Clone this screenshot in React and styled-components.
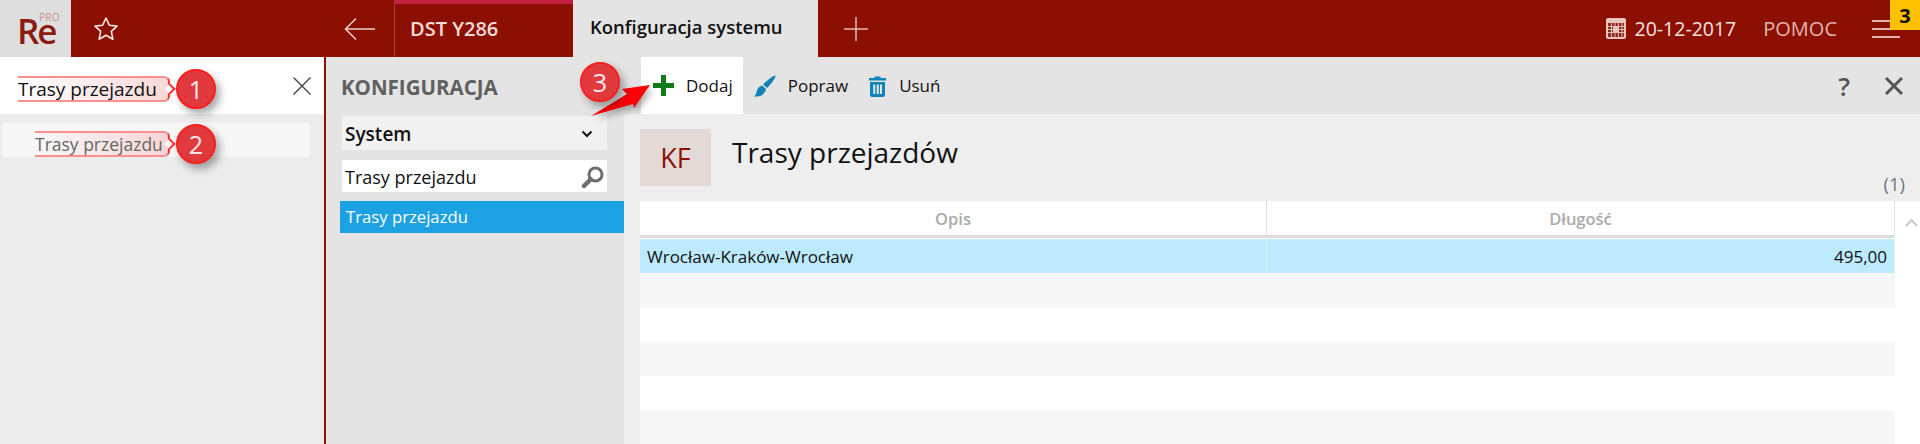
import styled, { createGlobalStyle } from "styled-components";

const GlobalStyle = createGlobalStyle`
  html, body {
    margin: 0;
    padding: 0;
    background: #fff;
  }
  body {
    font-family: "Open Sans", "Noto Sans", sans-serif;
    overflow: hidden;
  }
`;

const RED = "#8b1002";

const Rows = [0, 1, 2, 3, 4];

const App = () => {
  return (
    <Page>
      <GlobalStyle />
      <TopBar>
        <Logo>
          <LogoText>Re</LogoText>
          <LogoPro>PRO</LogoPro>
        </Logo>
        <StarButton>
          <svg width="26" height="26" viewBox="0 0 26 26" fill="none" stroke="#f6e7e4" strokeWidth="1.6" strokeLinejoin="round">
            <path d="M13 2l3.3 7.2 7.7.9-5.7 5.3 1.6 7.8L13 19.3l-6.9 3.9 1.6-7.8L2 10.1l7.7-.9z" />
          </svg>
        </StarButton>
        <BackButton>
          <svg width="31" height="24" viewBox="0 0 31 24" fill="none" stroke="#eccfca" strokeWidth="1.5">
            <path d="M31 12H1.5M12 1.5L1.5 12 12 22.5" />
          </svg>
        </BackButton>
        <Tab>DST Y286</Tab>
        <ActiveTab>Konfiguracja systemu</ActiveTab>
        <AddTab>
          <svg width="24" height="24" viewBox="0 0 24 24" stroke="#e2b9b3" strokeWidth="1.5">
            <path d="M12 0v24M0 12h24" />
          </svg>
        </AddTab>
        <RightGroup>
          <svg width="20" height="21" viewBox="0 0 20 21">
            <rect width="20" height="21" rx="2" fill="#e9c4bf" />
            <rect x="2" y="5" width="16" height="14" fill="#8b2a20" />
            <path d="M2 8.5h16M2 11.5h16M2 14.5h16M5.5 5v14M9 5v14M12.5 5v14M16 5v14" stroke="#e9c4bf" strokeWidth=".9" />
            <rect x="7" y="8" width="6" height="6" fill="#e9c4bf" />
          </svg>
          <DateText>20-12-2017</DateText>
          <HelpLink>POMOC</HelpLink>
          <Hamburger>
            <span />
            <span />
            <span />
          </Hamburger>
          <Notice>3</Notice>
        </RightGroup>
      </TopBar>

      <Body>
        <Sidebar>
          <SideSearch>
            <Marked $tail={11} $notch="#fff">
              Trasy przejazdu
              <Badge>1</Badge>
            </Marked>
            <ClearIcon width="18" height="18" viewBox="0 0 18 18" stroke="#444" strokeWidth="1.4">
              <path d="M.5.5l17 17M17.5.5l-17 17" />
            </ClearIcon>
          </SideSearch>
          <SideItem>
            <Marked $tail={5} $notch="#f7f7f7">
              Trasy przejazdu
              <Badge>2</Badge>
            </Marked>
          </SideItem>
        </Sidebar>

        <ConfigPanel>
          <ConfigTitle>KONFIGURACJA</ConfigTitle>
          <SelectBox>
            System
            <svg width="12" height="8" viewBox="0 0 12 8" fill="none" stroke="#111" strokeWidth="2">
              <path d="M1.5 1.5L6 6l4.5-4.5" />
            </svg>
          </SelectBox>
          <FilterBox>
            Trasy przejazdu
            <svg width="24" height="24" viewBox="0 0 24 24" fill="none" stroke="#6e6e6e">
              <circle cx="14.5" cy="9.5" r="6.5" strokeWidth="3" />
              <path d="M9.5 14.5L3 21" strokeWidth="4.5" strokeLinecap="round" />
            </svg>
          </FilterBox>
          <ConfigItem>Trasy przejazdu</ConfigItem>
        </ConfigPanel>

        <Main>
          <Toolbar>
            <Pointer width="64" height="36" viewBox="0 0 64 36">
              <polygon points="60,2 32,6 37,11 1,33 43,21 44,25" fill="#fb0007" />
            </Pointer>
            <PointerBadge>3</PointerBadge>
            <ToolButton $active>
              <svg width="21" height="21" viewBox="0 0 21 21">
                <path d="M8 0h5v8h8v5h-8v8H8v-8H0V8h8z" fill="#0f7d1a" />
              </svg>
              Dodaj
            </ToolButton>
            <ToolButton>
              <svg width="22" height="22" viewBox="0 0 22 22">
                <path d="M21.5.5c.5 2-4.5 9-8.5 12.500l-3.800-3.500C12.500 5.500 19.500.5 21.500.5zM8.300 10.500l3.700 3.500c-.5 3-3 6-6 7-2 .6-4.500.6-6 .4 2-1.500 2.300-3.200 2.800-5.400.6-2.800 2.800-5 5.500-5.500z" fill="#0f84b8" />
              </svg>
              Popraw
            </ToolButton>
            <ToolButton>
              <svg width="19" height="22" viewBox="-1 0 19 22">
                <path d="M0 3h5.500V1.500h6V3H17v2.500H0zM1 7h15v13c0 1-.8 2-2 2H3c-1.200 0-2-1-2-2zm3.300 2.500v9.500h2V9.500zm3.500 0v9.500h2V9.500zm3.200 0v9.500h2V9.500z" fill="#0f84b8" fillRule="evenodd" />
              </svg>
              Usuń
            </ToolButton>
            <ToolRight>
              <HelpMark>?</HelpMark>
              <svg width="18" height="18" viewBox="0 0 18 18" stroke="#555" strokeWidth="3">
                <path d="M1 1l16 16M17 1L1 17" />
              </svg>
            </ToolRight>
          </Toolbar>

          <Heading>
            <InitialsBox>KF</InitialsBox>
            <Title>Trasy przejazdów</Title>
            <Count>(1)</Count>
          </Heading>

          <Table>
            <HeadCell>Opis</HeadCell>
            <HeadCell>Długość</HeadCell>
            <ScrollCell>
              <svg width="13" height="9" viewBox="0 0 13 9" fill="none" stroke="#c8c8c8" strokeWidth="2">
                <path d="M1 8l5.5-6L12 8" />
              </svg>
            </ScrollCell>
            <SelectedCell>Wrocław-Kraków-Wrocław</SelectedCell>
            <SelectedCell $right>495,00</SelectedCell>
            <Spacer />
            {Rows.map((row) => (
              <EmptyRow key={row} $odd={row % 2 === 0} />
            ))}
          </Table>
        </Main>
      </Body>
    </Page>
  );
};

const Page = styled.div`
  width: 1920px;
  height: 444px;
  display: flex;
  flex-direction: column;
  overflow: hidden;
`;

const TopBar = styled.header`
  height: 57px;
  flex: none;
  display: flex;
  align-items: stretch;
  background: ${RED};
`;

const Logo = styled.div`
  position: relative;
  width: 71px;
  background: #dedede;
  box-sizing: border-box;
  padding: 21px 0 0 17px;
`;

const LogoText = styled.div`
  font-size: 35px;
  font-weight: 600;
  line-height: 20px;
  letter-spacing: -2px;
  color: #8b1a10;
`;

const LogoPro = styled.span`
  position: absolute;
  left: 39px;
  top: 13px;
  font-size: 10px;
  line-height: 8px;
  letter-spacing: 0.3px;
  color: #c5918b;
`;

const StarButton = styled.div`
  display: flex;
  align-items: center;
  margin: 0 0 0 22px;
`;

const BackButton = styled.div`
  display: flex;
  align-items: center;
  margin-left: 225px;
  width: 50px;
`;

const Tab = styled.div`
  width: 179px;
  box-sizing: border-box;
  border-left: 1px solid #a8443a;
  border-top: 4px solid #c4203f;
  padding: 0 0 4px 15px;
  display: flex;
  align-items: center;
  font-size: 20px;
  font-weight: 600;
  color: #f3dcd8;
`;

const ActiveTab = styled.div`
  width: 245px;
  box-sizing: border-box;
  padding: 0 0 4px 17px;
  display: flex;
  align-items: center;
  background: #e4e4e4;
  font-size: 18.5px;
  font-weight: 600;
  color: #111;
`;

const AddTab = styled.div`
  display: flex;
  align-items: center;
  margin-left: 26px;
`;

const RightGroup = styled.div`
  position: relative;
  margin-left: auto;
  display: flex;
  align-items: center;
  padding-right: 20px;
`;

const DateText = styled.span`
  margin-left: 9px;
  font-size: 19.5px;
  color: #f3e3e0;
`;

const HelpLink = styled.span`
  margin-left: 27px;
  font-size: 20px;
  color: #e0b5af;
`;

const Hamburger = styled.div`
  margin-left: 35px;
  width: 28px;
  display: flex;
  flex-direction: column;
  gap: 6px;

  span {
    display: block;
    height: 2px;
    background: #e0b5af;
  }
`;

const Notice = styled.div`
  position: absolute;
  right: 0;
  top: 0;
  width: 30px;
  height: 30px;
  display: flex;
  align-items: center;
  justify-content: center;
  background: #ffc000;
  color: #111;
  font-size: 20px;
  font-weight: 700;
`;

const Body = styled.div`
  flex: 1;
  display: flex;
  min-height: 0;
`;

const Sidebar = styled.aside`
  width: 326px;
  flex: none;
  box-sizing: border-box;
  background: #ececec;
  border-right: 2px solid ${RED};
`;

const SideSearch = styled.div`
  height: 57px;
  box-sizing: border-box;
  display: flex;
  align-items: center;
  padding: 6px 13px 0 18px;
  background: #fff;
  font-size: 19px;
  color: #111;
`;

const ClearIcon = styled.svg`
  margin: -6px 0 0 auto;
`;

const SideItem = styled.div`
  height: 34px;
  box-sizing: border-box;
  margin: 9px 14px 0 2px;
  padding: 7px 0 0 33px;
  display: flex;
  align-items: center;
  background: #f7f7f7;
  font-size: 17.5px;
  color: #666;
`;

const Marked = styled.span`
  position: relative;
  display: inline-block;
  height: 26px;
  box-sizing: border-box;
  line-height: 22px;
  background: linear-gradient(90deg, rgba(248, 180, 180, 0) 0%, rgba(248, 205, 205, 0.8) 100%);
  border-top: 2px solid #fb8f8f;
  border-bottom: 2px solid #fb8f8f;
  border-right: 2px solid #f33;
  border-radius: 0 6px 6px 0;
  padding-right: ${({ $tail }) => $tail}px;

  &::after {
    content: "";
    position: absolute;
    right: -6px;
    top: 7px;
    width: 6px;
    height: 6px;
    border-top: 2px solid #f33;
    border-right: 2px solid #f33;
    background: ${({ $notch }) => $notch};
    transform: rotate(45deg);
  }
`;

const Badge = styled.span`
  position: absolute;
  left: calc(100% + 8px);
  top: -9px;
  z-index: 1;
  width: 40px;
  height: 40px;
  box-sizing: border-box;
  display: flex;
  align-items: center;
  justify-content: center;
  border: 2px solid #fa1f1f;
  border-radius: 50%;
  background: #e13a3e;
  box-shadow: 4px 5px 8px rgba(0, 0, 0, 0.35);
  color: #fbeaea;
  font-size: 25px;
  font-weight: 400;
`;

const ConfigPanel = styled.section`
  width: 298px;
  flex: none;
  box-sizing: border-box;
  padding: 18px 0 0 16px;
  background: #e4e4e4;
`;

const ConfigTitle = styled.div`
  height: 24px;
  line-height: 24px;
  font-size: 20.5px;
  font-weight: 700;
  color: #606060;
  margin-left: -1px;
`;

const SelectBox = styled.div`
  width: 265px;
  height: 34px;
  box-sizing: border-box;
  margin-top: 17px;
  padding: 1px 14px 0 3px;
  display: flex;
  align-items: center;
  justify-content: space-between;
  background: #f1f1f1;
  font-size: 19px;
  font-weight: 600;
  color: #111;
`;

const FilterBox = styled.div`
  width: 265px;
  height: 32px;
  box-sizing: border-box;
  margin-top: 10px;
  padding: 1px 2px 0 3px;
  display: flex;
  align-items: center;
  justify-content: space-between;
  background: #fff;
  font-size: 18px;
  color: #111;
`;

const ConfigItem = styled.div`
  width: 284px;
  height: 32px;
  box-sizing: border-box;
  margin: 9px 0 0 -2px;
  padding: 0 0 2px 6px;
  display: flex;
  align-items: center;
  background: #1ca1e2;
  font-size: 16.7px;
  color: #fff;
`;

const Main = styled.main`
  flex: 1;
  min-width: 0;
  background: #eee;
`;

const Toolbar = styled.div`
  position: relative;
  height: 57px;
  display: flex;
  align-items: stretch;
  padding-left: 17px;
  background: #e4e4e4;
`;

const Pointer = styled.svg`
  position: absolute;
  left: -34px;
  top: 26px;
  z-index: 2;
  filter: drop-shadow(3px 4px 3px rgba(0, 0, 0, 0.3));
`;

const PointerBadge = styled(Badge)`
  left: -44px;
  top: 5px;
  z-index: 3;
`;

const ToolButton = styled.div`
  display: flex;
  align-items: center;
  gap: 12px;
  padding: ${({ $active }) => ($active ? "0 10px 0 12px" : "0 9px 0 11px")};
  font-size: 17px;
  color: #111;
  background: ${({ $active }) => ($active ? "#fff" : "transparent")};
`;

const ToolRight = styled.div`
  margin-left: auto;
  display: flex;
  align-items: center;
  gap: 35px;
  padding-right: 17px;
`;

const HelpMark = styled.span`
  font-size: 26px;
  font-weight: 600;
  color: #555;
`;

const Heading = styled.div`
  height: 87px;
  box-sizing: border-box;
  padding: 15px 15px 0 16px;
  display: flex;
  align-items: flex-start;
`;

const InitialsBox = styled.div`
  width: 71px;
  height: 57px;
  display: flex;
  align-items: center;
  justify-content: center;
  background: #e3d9d7;
  color: ${RED};
  font-size: 27px;
  font-weight: 500;
`;

const Title = styled.h1`
  margin: 2px 0 0 21px;
  font-size: 28px;
  font-weight: 400;
  line-height: 42px;
  color: #111;
`;

const Count = styled.span`
  margin-left: auto;
  margin-top: 42px;
  line-height: 26px;
  font-size: 18.5px;
  color: #6b7680;
`;

const Table = styled.div`
  height: 243px;
  margin-left: 16px;
  display: grid;
  grid-template-columns: 627px 628px 25px;
  grid-template-rows: 38px repeat(6, 34.3px);
  background: #fff;
`;

const HeadCell = styled.div`
  box-sizing: border-box;
  margin-bottom: 1px;
  display: flex;
  align-items: center;
  justify-content: center;
  border-right: 1px dotted #ccc;
  border-bottom: 3px solid #ddd;
  font-size: 16.5px;
  font-weight: 600;
  color: #aaa;
`;

const ScrollCell = styled.div`
  padding: 9px 0 0 10px;
`;

const SelectedCell = styled.div`
  display: flex;
  align-items: center;
  justify-content: ${({ $right }) => ($right ? "flex-end" : "flex-start")};
  padding: 1px 7px 0;
  border-right: 1px solid #d6f2fd;
  background: #bdeafc;
  font-size: 17px;
  color: #111;
`;

const Spacer = styled.div``;

const EmptyRow = styled.div`
  grid-column: 1 / span 2;
  background: ${({ $odd }) => ($odd ? "#f7f7f7" : "#fff")};
`;

export default App;
